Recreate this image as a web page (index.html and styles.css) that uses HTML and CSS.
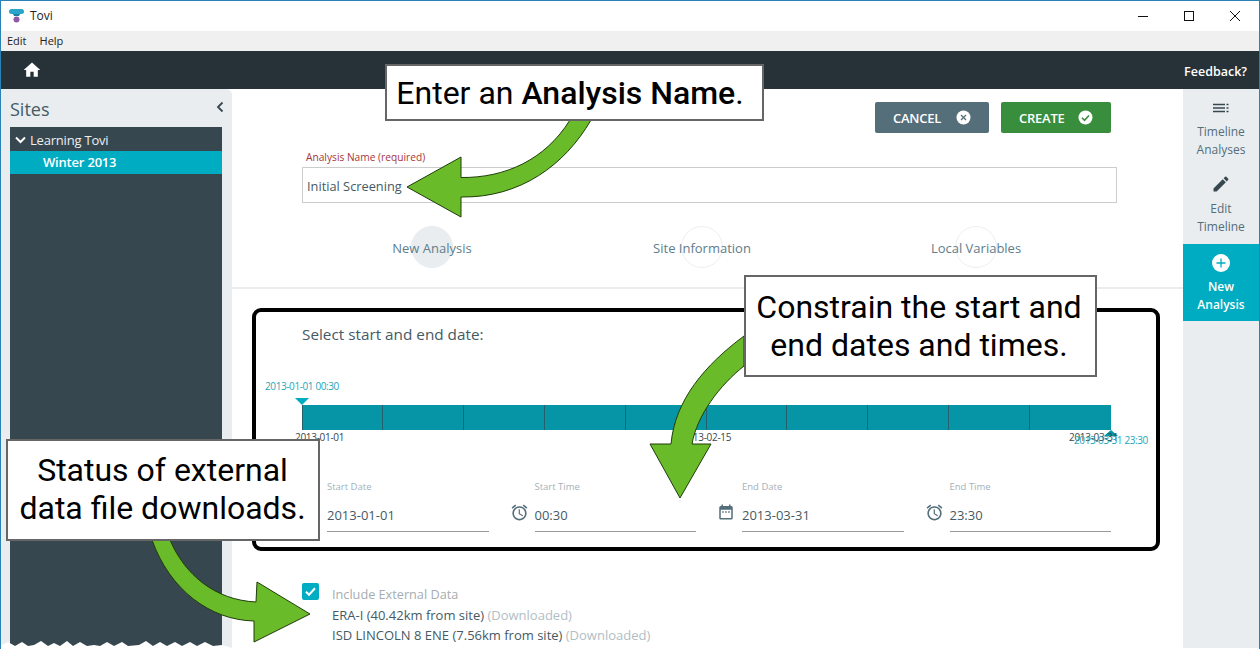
FILE: index.html
```html
<!DOCTYPE html>
<html lang="en">
  <head>
    <meta charset="UTF-8" />
    <title>Tovi</title>
    <link rel="stylesheet" href="styles.css">
  </head>
  <body>
    <div class="window">
      <div class="titlebar">
        <svg class="logo" width="16" height="14" viewBox="0 0 16 14">
          <rect x="0" y="0" width="15" height="5" rx="2.5" fill="#2aa5c9" />
          <path d="M4 5h7l-1 2H5z" fill="#1d7f9c" />
          <circle cx="7.5" cy="10.5" r="3" fill="#8e5aa8" />
        </svg>
        <span class="title">Tovi</span>
        <div class="win-controls">
          <svg width="12" height="12" viewBox="0 0 12 12"><path d="M1 6.500h10" stroke="#111" fill="none" /></svg>
          <svg width="12" height="12" viewBox="0 0 12 12"><rect x="1.500" y="1.500" width="9" height="9" stroke="#111" fill="none" /></svg>
          <svg width="12" height="12" viewBox="0 0 12 12"><path d="M1 1l10 10M11 1L1 11" stroke="#111" fill="none" /></svg>
        </div>
      </div>
      <div class="menubar">
        <span>Edit</span>
        <span>Help</span>
      </div>
      <div class="navbar">
        <svg class="home" width="20" height="20" viewBox="0 0 24 24"><path d="M10 20v-6h4v6h5v-8h3L12 3 2 12h3v8z" fill="#fff" /></svg>
        <span class="feedback">Feedback?</span>
      </div>

      <div class="content">
        <aside class="sidebar">
          <div class="sidebar-head">
            <span>Sites</span>
            <svg class="collapse" width="10" height="12" viewBox="0 0 10 12"><path d="M7.500 1.500L3 6l4.500 4.500" stroke="#37474f" stroke-width="1.800" fill="none" /></svg>
          </div>
          <div class="tree">
            <div class="tree-parent">
              <svg width="11" height="8" viewBox="0 0 11 8"><path d="M1 1.500l4.500 4.500L10 1.500" stroke="#fff" stroke-width="2" fill="none" /></svg>
              <span>Learning Tovi</span>
            </div>
            <div class="tree-child">Winter 2013</div>
          </div>
        </aside>

        <main class="main">
          <div class="toolbar">
            <button class="btn btn-cancel">
              CANCEL
              <svg width="15" height="15" viewBox="0 0 15 15"><circle cx="7.500" cy="7.500" r="7" fill="#fff" /><path d="M5 5l5 5M10 5l-5 5" stroke="#546e7a" stroke-width="1.300" /></svg>
            </button>
            <button class="btn btn-create">
              CREATE
              <svg width="15" height="15" viewBox="0 0 15 15"><circle cx="7.500" cy="7.500" r="7" fill="#fff" /><path d="M4 7.800l2.500 2.500L11 5.500" stroke="#388e3c" stroke-width="1.600" fill="none" /></svg>
            </button>
          </div>

          <div class="name-field">
            <label>Analysis Name (required)</label>
            <div class="name-input">Initial Screening</div>
          </div>

          <div class="steps">
            <div class="step step-active"><i></i><span>New Analysis</span></div>
            <div class="step"><i></i><span>Site Information</span></div>
            <div class="step"><i></i><span>Local Variables</span></div>
          </div>

          <hr class="divider" />

          <section class="panel">
            <h3>Select start and end date:</h3>
            <div class="timeline">
              <span class="tl-start">2013-01-01 00:30</span>
              <span class="tl-marker-start"></span>
              <div class="tl-bar">
                <b></b><b></b><b></b><b></b><b></b><b></b><b></b><b></b><b></b><b></b>
              </div>
              <span class="tl-marker-end"></span>
              <span class="tl-date tl-date-a">2013-01-01</span>
              <span class="tl-date tl-date-b">2013-02-15</span>
              <span class="tl-date tl-date-c">2013-03-31</span>
              <span class="tl-end">2013-03-31 23:30</span>
            </div>
            <div class="fields">
              <div class="field">
                <label>Start Date</label>
                <svg width="18" height="18" viewBox="0 0 24 24"><path d="M19 4h-1V2h-2v2H8V2H6v2H5a2 2 0 0 0-2 2v14a2 2 0 0 0 2 2h14a2 2 0 0 0 2-2V6a2 2 0 0 0-2-2zm0 16H5V9h14v11zM7 11h2v2H7zM11 11h2v2h-2zM15 11h2v2h-2z" fill="#546e7a" /></svg>
                <div class="value">2013-01-01</div>
              </div>
              <div class="field">
                <label>Start Time</label>
                <svg width="19" height="19" viewBox="0 0 24 24"><path d="M22 5.720l-4.600-3.860-1.290 1.530 4.600 3.860L22 5.720zM7.880 3.390L6.600 1.860 2 5.710l1.290 1.530 4.590-3.850zM12.500 8H11v6l4.750 2.850.75-1.230-4-2.370V8zM12 4c-4.970 0-9 4.030-9 9s4.030 9 9 9 9-4.030 9-9-4.030-9-9-9zm0 16c-3.870 0-7-3.130-7-7s3.130-7 7-7 7 3.130 7 7-3.130 7-7 7z" fill="#546e7a" /></svg>
                <div class="value">00:30</div>
              </div>
              <div class="field">
                <label>End Date</label>
                <svg width="18" height="18" viewBox="0 0 24 24"><path d="M19 4h-1V2h-2v2H8V2H6v2H5a2 2 0 0 0-2 2v14a2 2 0 0 0 2 2h14a2 2 0 0 0 2-2V6a2 2 0 0 0-2-2zm0 16H5V9h14v11zM7 11h2v2H7zM11 11h2v2h-2zM15 11h2v2h-2z" fill="#546e7a" /></svg>
                <div class="value">2013-03-31</div>
              </div>
              <div class="field">
                <label>End Time</label>
                <svg width="19" height="19" viewBox="0 0 24 24"><path d="M22 5.720l-4.600-3.860-1.290 1.530 4.600 3.860L22 5.720zM7.880 3.390L6.600 1.860 2 5.710l1.290 1.530 4.590-3.850zM12.500 8H11v6l4.750 2.850.75-1.230-4-2.370V8zM12 4c-4.970 0-9 4.030-9 9s4.030 9 9 9 9-4.030 9-9-4.030-9-9-9zm0 16c-3.870 0-7-3.130-7-7s3.130-7 7-7 7 3.130 7 7-3.130 7-7 7z" fill="#546e7a" /></svg>
                <div class="value">23:30</div>
              </div>
            </div>
          </section>

          <div class="external">
            <span class="checkbox">
              <svg width="17" height="17" viewBox="0 0 17 17"><path d="M4 8.800l3 3 6-6.500" stroke="#fff" stroke-width="2" fill="none" /></svg>
            </span>
            <div class="external-text">
              <div class="external-title">Include External Data</div>
              <div>ERA-I (40.42km from site) <em>(Downloaded)</em></div>
              <div>ISD LINCOLN 8 ENE (7.56km from site) <em>(Downloaded)</em></div>
            </div>
          </div>
        </main>

        <nav class="rail">
          <div class="rail-item">
            <svg class="rail-list" width="18" height="12" viewBox="0 0 18 12"><path d="M1 1.500h12M1 5h12M1 8.500h12" stroke="#37474f" stroke-width="1.500" /><path d="M14.500 1.500h2M14.500 5h2M14.500 8.500h2" stroke="#37474f" stroke-width="1.500" /></svg>
            <span>Timeline<br />Analyses</span>
          </div>
          <div class="rail-item">
            <svg width="20" height="20" viewBox="0 0 24 24"><path d="M3 17.250V21h3.750L17.810 9.940l-3.750-3.750L3 17.250zM20.710 7.040c.39-.39.39-1.020 0-1.410l-2.340-2.340c-.39-.39-1.020-.39-1.410 0l-1.830 1.830 3.750 3.750 1.830-1.830z" fill="#37474f" /></svg>
            <span>Edit<br />Timeline</span>
          </div>
          <div class="rail-item rail-active">
            <svg width="18" height="18" viewBox="0 0 18 18"><circle cx="9" cy="9" r="9" fill="#fff" /><path d="M9 4.500v9M4.500 9h9" stroke="#00acc1" stroke-width="1.300" /></svg>
            <span>New<br />Analysis</span>
          </div>
        </nav>
      </div>

      <!-- annotations drawn over the screenshot -->
      <svg class="overlay" width="1260" height="649" viewBox="0 0 1260 649">
        <g fill="#6abb2a" stroke="#1f3d0a" stroke-width="1">
          <path d="M570 120C545 160 505 178 461 177.500L461 157 407 187 461 217 461 197C520 198 565 165 591 120Z" />
          <path d="M744 336C705 365 675 400 671 444L650 444 680 498 711 444 692 444C697 415 720 385 744 366Z" />
          <path d="M152 540C170 590 210 620 254 621L254 642 310 614 257 582 256 602C215 600 185 575 170 540Z" />
        </g>
        <path fill="#fff" d="M0 649L0 646 8 642 15 646 22 642 28 646 34 645 41 641 48 646 54 643 60 646 67 641 73 646 80 642 87 646 94 645 100 646 107 642 114 646 122 642 128 646 139 645 146 641 153 646 160 642 167 646 175 642 182 646 190 642 197 646 205 642 213 646 222 645 232 648 1183 648 1260 648 1260 649Z" />
      </svg>
      <div class="callout callout-name">Enter an <b>Analysis Name</b>.</div>
      <div class="callout callout-dates">Constrain the start and<br />end dates and times.</div>
      <div class="callout callout-status">Status of external<br />data file downloads.</div>
    </div>
  </body>
</html>
```

FILE: styles.css
```css
* {
  box-sizing: border-box;
}
html,
body {
  margin: 0;
  height: 649px;
  overflow: hidden;
}
body {
  font-family: "Open Sans", "Noto Sans", sans-serif;
  color: #37474f;
  background: white;
}
.window {
  position: relative;
  height: 649px;
  display: flex;
  flex-direction: column;
  border: 1px solid #2a82b4;
  border-bottom: none;
  overflow: hidden;
}

/* title and menu */
.titlebar {
  height: 30px;
  flex: none;
  display: flex;
  align-items: center;
  padding-left: 8px;
  background: white;
}
.logo {
  margin-top: -1px;
}
.title {
  margin-left: 5px;
  margin-top: -1px;
  font-size: 12px;
  color: #222;
}
.win-controls {
  margin-left: auto;
  display: flex;
  gap: 34px;
  padding-right: 18px;
}
.menubar {
  height: 20px;
  flex: none;
  display: flex;
  align-items: center;
  gap: 13px;
  padding: 0 0 2px 6px;
  font-size: 11px;
  color: #222;
  background: #f0f0f0;
}
.navbar {
  height: 38px;
  flex: none;
  display: flex;
  align-items: center;
  justify-content: space-between;
  padding: 0 12px 0 21px;
  background: #263238;
}
.feedback {
  color: white;
  font-size: 12.500px;
  font-weight: 600;
  margin-top: 3px;
}

.content {
  flex: 1;
  display: flex;
  min-height: 0;
}

/* sites */
.sidebar {
  width: 231px;
  flex: none;
  padding: 0 10px 0 9px;
  display: flex;
  flex-direction: column;
  background: #e9edf0;
  border-top-right-radius: 6px;
}
.sidebar-head {
  height: 38px;
  display: flex;
  align-items: center;
  justify-content: space-between;
  padding-top: 2px;
  font-size: 18px;
  color: #455a64;
}
.collapse {
  margin: -5px -3px 0 0;
}
.tree {
  flex: 1;
  background: #37474f;
  color: white;
  font-size: 13px;
}
.tree-parent {
  height: 24px;
  display: flex;
  align-items: center;
  gap: 4px;
  padding: 2px 0 0 5px;
  font-weight: 500;
  letter-spacing: -0.2px;
  color: #eceff1;
}
.tree-child {
  height: 23px;
  padding-left: 33px;
  line-height: 23px;
  font-weight: 600;
  letter-spacing: -0.2px;
  background: #00acc1;
}

/* main column */
.main {
  flex: 1;
  min-width: 0;
  display: flex;
  flex-direction: column;
}
.toolbar {
  display: flex;
  justify-content: flex-end;
  gap: 12px;
  padding: 13px 72px 0 0;
}
.btn {
  height: 31px;
  display: flex;
  align-items: center;
  justify-content: space-between;
  padding: 0 18px;
  border: none;
  border-radius: 2px;
  color: white;
  font-family: inherit;
  font-size: 13px;
  font-weight: 600;
  letter-spacing: -0.25px;
}
.btn-cancel {
  width: 114px;
  background: #546e7a;
}
.btn-create {
  width: 110px;
  background: #388e3c;
}
.name-field {
  margin: 17px 66px 0 70px;
}
.name-field label {
  display: block;
  padding: 0 0 2px 4px;
  font-size: 10.200px;
  line-height: 15px;
  color: #a8353a;
}
.name-input {
  height: 36px;
  padding-left: 4px;
  line-height: 36px;
  font-size: 12.800px;
  color: #455a64;
  border: 1px solid #ccc;
}
.steps {
  display: grid;
  grid-template-columns: 270px 270px 278px;
  margin: 23px 0 0 65px;
}
.step {
  position: relative;
  height: 42px;
  display: flex;
  align-items: center;
  justify-content: center;
  padding-top: 2px;
  font-size: 13px;
  color: #607d8b;
}
.step i {
  position: absolute;
  left: 50%;
  top: 0;
  width: 42px;
  height: 42px;
  margin-left: -21px;
  border: 1px solid #eceff1;
  border-radius: 50%;
}
.step span {
  position: relative;
}
.step-active i {
  background: #e9edf0;
  border-color: #e9edf0;
}
.divider {
  width: 100%;
  height: 2px;
  margin: 19px 0 0;
  border: none;
  background: #e9edf0;
}
.panel {
  width: 908px;
  height: 243px;
  margin: 19px 0 0 20px;
  padding: 12px 45px 0 46px;
  border: 4px solid black;
  border-radius: 9px;
}
.panel h3 {
  margin: 0;
  font-size: 15.300px;
  font-weight: 400;
  line-height: 20px;
  color: #455a64;
}

/* timeline */
.timeline {
  position: relative;
  height: 25px;
  margin-top: 61px;
}
.tl-bar {
  height: 25px;
  display: grid;
  grid-template-columns: repeat(10, 1fr);
  background: #0595a6;
  box-shadow: inset 1px 0 0 #25606c;
}
.tl-bar b {
  border-right: 1px solid #25606c;
}
.tl-bar b:last-child {
  border-right: none;
}
.tl-start,
.tl-end {
  position: absolute;
  font-size: 10px;
  line-height: 12px;
  letter-spacing: -0.4px;
  color: #1fa5b8;
  white-space: nowrap;
}
.tl-start {
  left: -37px;
  top: -25px;
}
.tl-end {
  left: 772px;
  top: 29px;
}
.tl-marker-start,
.tl-marker-end {
  position: absolute;
  width: 0;
  height: 0;
  border-left: 7px solid transparent;
  border-right: 7px solid transparent;
}
.tl-marker-start {
  left: -7px;
  top: -7px;
  border-top: 7px solid #00acc1;
}
.tl-marker-end {
  right: -7px;
  top: 25px;
  border-top: none;
  border-bottom: 6px solid #0595a6;
}
.tl-date {
  position: absolute;
  top: 25px;
  font-size: 10px;
  line-height: 14px;
  letter-spacing: -0.3px;
  color: #37474f;
  white-space: nowrap;
}
.tl-date-a {
  left: -7px;
}
.tl-date-b {
  left: 380px;
}
.tl-date-c {
  left: 767px;
}

/* date fields */
.fields {
  display: grid;
  grid-template-columns: repeat(4, 1fr);
  column-gap: 21px;
  margin-top: 48px;
}
.field {
  display: grid;
  grid-template-columns: 25px 1fr;
  grid-template-rows: 16px 38px;
  align-items: center;
}
.field label {
  grid-column: 2;
  font-size: 9.500px;
  color: #a5b1b8;
}
.field svg {
  grid-row: 2;
  margin-top: -2px;
}
.field .value {
  grid-row: 2;
  grid-column: 2;
  height: 38px;
  padding-top: 5px;
  line-height: 33px;
  font-size: 13px;
  color: #455a64;
  border-bottom: 1px solid #999;
}

/* external data */
.external {
  display: flex;
  gap: 13px;
  margin: 32px 0 0 70px;
}
.checkbox {
  width: 17px;
  height: 17px;
  flex: none;
  border-radius: 2px;
  background: #00acc1;
}
.checkbox svg {
  display: block;
}
.external-text {
  padding-top: 1px;
  font-size: 13px;
  line-height: 20.500px;
  color: #455a64;
}
.external-title {
  font-size: 12.700px;
  color: #a5adb2;
}
.external-text em {
  font-style: normal;
  color: #b0bec5;
}

/* right rail */
.rail {
  width: 76px;
  flex: none;
  display: flex;
  flex-direction: column;
  background: #e9edf0;
}
.rail-item {
  height: 77px;
  display: flex;
  flex-direction: column;
  align-items: center;
  justify-content: flex-end;
  gap: 6px;
  padding-bottom: 7px;
  text-align: center;
  font-size: 12px;
  line-height: 18px;
  color: #546e7a;
}
.rail-list {
  margin-bottom: 2px;
}
.rail-active {
  margin-top: 1px;
  background: #00acc1;
  color: white;
  font-weight: 600;
}

/* annotations */
.overlay {
  position: absolute;
  left: -1px;
  top: -1px;
}
.callout {
  position: absolute;
  font-family: Roboto, sans-serif;
  font-size: 32px;
  line-height: 38px;
  text-align: center;
  color: black;
  background: white;
  border: 2px solid #666;
}
.callout b {
  font-weight: 500;
}
.callout-name {
  left: 384px;
  top: 63px;
  width: 379px;
  height: 57px;
  padding: 8px 9px 0 0;
}
.callout-dates {
  left: 743px;
  top: 274px;
  width: 353px;
  height: 102px;
  padding: 11px 3px 0 0;
}
.callout-status {
  left: 5px;
  top: 438px;
  width: 314px;
  height: 102px;
  padding: 10px 1px 0 0;
}
```
